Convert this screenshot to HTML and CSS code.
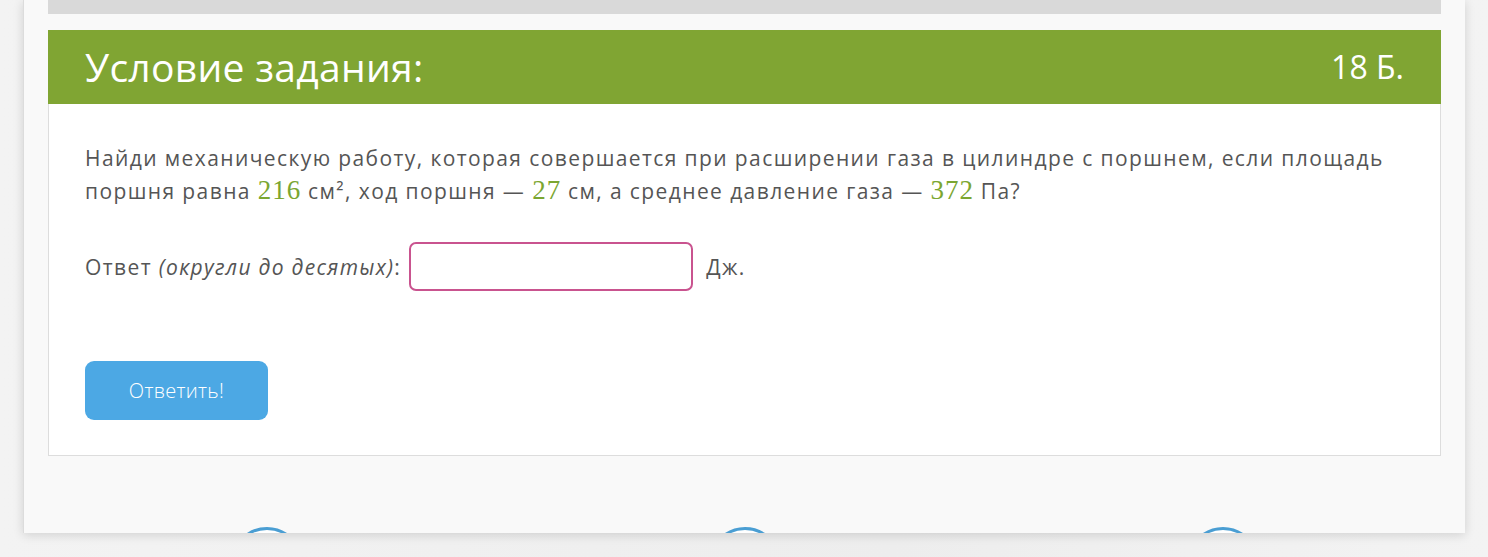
FILE: index.html
```html
<!DOCTYPE html>
<html lang="ru">
<head>
    <meta charset="UTF-8">
    <title>Условие задания</title>
    <link rel="stylesheet" href="styles.css">
</head>
<body>
    <div class="page">
        <div class="panel">
            <div class="prev-bar"></div>

            <!-- Task block -->
            <div class="task">
                <div class="task-head">
                    <span class="task-title">Условие задания:</span>
                    <span class="task-points">18 Б.</span>
                </div>
                <div class="task-body">
                    <p class="task-text">Найди механическую работу, которая совершается при расширении газа в цилиндре с поршнем, если площадь поршня равна <span class="num">216</span> см², ход поршня — <span class="num">27</span> см, а среднее давление газа — <span class="num">372</span> Па?</p>
                    <div class="answer-row">
                        <span>Ответ <i>(округли до десятых)</i>:</span>
                        <input type="text" class="answer-input">
                        <span>Дж.</span>
                    </div>
                    <button class="submit-btn">Ответить!</button>
                </div>
            </div>

            <!-- Bottom nav circles -->
            <div class="nav-row">
                <div class="nav-circle"></div>
                <div class="nav-circle"></div>
                <div class="nav-circle"></div>
            </div>
        </div>
    </div>
</body>
</html>
```

FILE: styles.css
```css
body {
    margin: 0;
    font-family: "Open Sans", "Liberation Sans", sans-serif;
    background: linear-gradient(90deg, #f3f3f3 0%, #ededed 60%, #f3f3f3 100%);
    height: 557px;
    overflow: hidden;
}
.page {
    padding: 0 23px;
}
.panel {
    height: 533px;
    box-sizing: border-box;
    background: #f9f9f9;
    border-left: 1px solid #dcdcdc;
    padding: 0 24px;
    box-shadow: 0 2px 10px rgba(0, 0, 0, 0.14);
    overflow: hidden;
}
.prev-bar {
    height: 14px;
    background: #d9d9d9;
}
.task {
    margin-top: 16px;
}
.task-head {
    height: 74px;
    background: #80a533;
    color: #fff;
    display: flex;
    justify-content: space-between;
    align-items: center;
    padding: 0 37px;
}
.task-title {
    font-size: 39px;
    letter-spacing: 0.3px;
    padding-bottom: 2px;
}
.task-points {
    font-size: 32px;
    padding-bottom: 2px;
}
.task-body {
    background: #fff;
    border: 1px solid #dddddd;
    border-top: none;
    padding: 38px 36px 35px;
    color: #555;
    font-size: 21px;
    letter-spacing: 1.4px;
}
.task-text {
    margin: 0;
    line-height: 33px;
}
.num {
    display: inline-block;
    font-family: "Liberation Serif", "Times New Roman", serif;
    color: #7ba631;
    font-size: 27px;
    line-height: 22px;
    letter-spacing: 1px;
}
.answer-row {
    display: flex;
    align-items: center;
    margin-top: 34px;
}
.answer-row i {
    font-style: italic;
    letter-spacing: 1.3px;
}
.answer-input {
    width: 284px;
    height: 49px;
    box-sizing: border-box;
    border: 2px solid #c9538f;
    border-radius: 7px;
    margin: 0 13px 0 8px;
}
.submit-btn {
    display: block;
    margin-top: 70px;
    width: 183px;
    height: 59px;
    background: #4ca8e4;
    color: #fff;
    border: none;
    border-radius: 9px;
    font-family: "Open Sans", "Liberation Sans", sans-serif;
    font-size: 20px;
    font-weight: 300;
    letter-spacing: 0.3px;
    cursor: pointer;
}
.nav-row {
    display: flex;
    justify-content: center;
    gap: 406px;
    margin-top: 71px;
}
.nav-circle {
    width: 66px;
    height: 66px;
    flex: none;
    border: 3px solid #4a9ed3;
    border-radius: 50%;
    background: #fff;
}
```
